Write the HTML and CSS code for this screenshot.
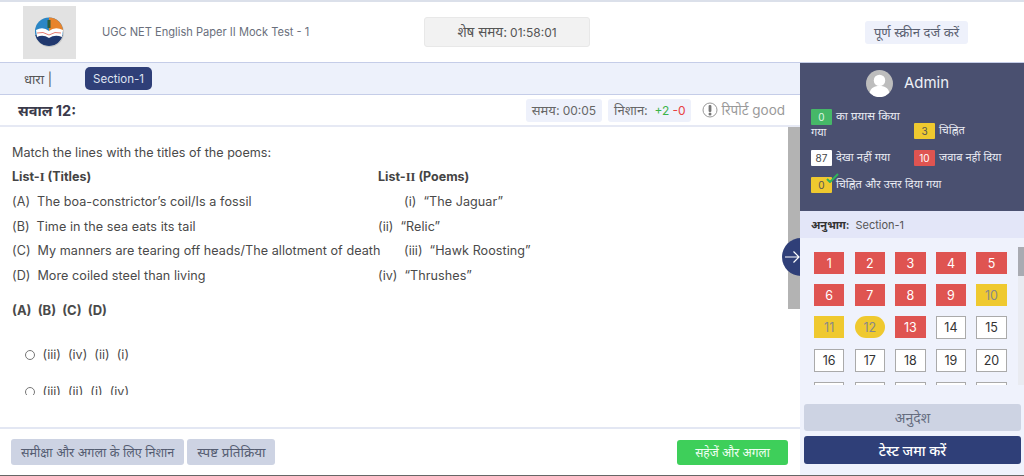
FILE: index.html
```html
<!DOCTYPE html>
<html lang="hi">
<head>
<meta charset="utf-8">
<title>UGC NET English Paper II Mock Test - 1</title>
<link rel="stylesheet" href="styles.css">
</head>
<body>
<div class="page">
  <header class="topbar">
    <svg class="logo" viewBox="0 0 53 53" aria-label="logo">
      <rect width="53" height="53" fill="#e2e2e2"/>
      <circle cx="26.500" cy="26.500" r="14.500" fill="#c6c6c6"/>
      <circle cx="26" cy="25.500" r="14" fill="#2b86c5"/>
      <path d="M26 11.500a14 14 0 0 1 14 14h-14z" fill="#e8842c"/>
      <path d="M12.300 29a14 14 0 0 0 27.400 0z" fill="#21386e"/>
      <path d="M13 24q7-4 13 1q6-5 14-1l-1 7q-7-3-13 1q-6-4-12-1z" fill="#fff"/>
      <path d="M14 27q6-2 12 2q6-4 12-2" fill="none" stroke="#e05a4a" stroke-width=".8"/>
      <rect x="24.500" y="14" width="3" height="8" fill="#2f5d3a"/>
    </svg>
    <div class="test-title">UGC NET English Paper II Mock Test - 1</div>
    <div class="timer">शेष समय: <span class="num">01:58:01</span></div>
    <button class="fullscreen">पूर्ण स्क्रीन दर्ज करें</button>
  </header>
  <div class="workspace">
    <main class="main">
      <div class="section-bar">
        <span class="section-label">धारा |</span>
        <span class="section-pill">Section-1</span>
      </div>
      <div class="question-head">
        <h2 class="question-no">सवाल 12:</h2>
        <div class="question-meta">
          <span class="meta-pill">समय:<span class="num">00:05</span></span>
          <span class="meta-pill">निशान: <span class="num plus">+2</span> <span class="num minus">-0</span></span>
          <span class="report">
            <svg class="report-icon" viewBox="0 0 16 16"><circle cx="8" cy="8" r="7" fill="none" stroke="#999" stroke-width="1"/><rect x="6.600" y="3" width="2.800" height="7" rx="1" fill="#777"/><circle cx="8" cy="12" r="1.500" fill="#777"/></svg>
            रिपोर्ट good
          </span>
        </div>
      </div>
      <div class="question-area">
        <div class="question-scroll">
          <p class="prompt">Match the lines with the titles of the poems:</p>
          <table class="lists">
            <tr><th class="col-a">List-<span class="serif">I</span> (Titles)</th><th>List-<span class="serif">II</span> (Poems)</th></tr>
            <tr><td><span class="tag">(A)</span>The boa-constrictor’s coil/Is a fossil</td><td class="indent"><span class="tag">(i)</span>“The Jaguar”</td></tr>
            <tr><td><span class="tag">(B)</span>Time in the sea eats its tail</td><td><span class="tag">(ii)</span>“Relic”</td></tr>
            <tr><td><span class="tag">(C)</span>My manners are tearing off heads/The allotment of death</td><td class="indent"><span class="tag">(iii)</span>“Hawk Roosting”</td></tr>
            <tr><td><span class="tag">(D)</span>More coiled steel than living</td><td><span class="tag">(iv)</span>“Thrushes”</td></tr>
          </table>
          <p class="answer-key">(A)&nbsp; (B)&nbsp; (C)&nbsp; (D)</p>
          <label class="option"><input type="radio" name="q"> (iii)&nbsp; (iv)&nbsp; (ii)&nbsp; (i)</label>
          <label class="option"><input type="radio" name="q"> (iii)&nbsp; (ii)&nbsp; (i)&nbsp; (iv)</label>
        </div>
        <div class="main-thumb"></div>
      </div>
      <footer class="actions">
        <button class="btn-muted btn-review">समीक्षा और अगला के लिए निशान</button>
        <button class="btn-muted btn-clear">स्पष्ट प्रतिक्रिया</button>
        <button class="btn-save">सहेजें और अगला</button>
      </footer>
    </main>
    <button class="collapse" aria-label="collapse">
      <svg viewBox="0 0 16 16"><path d="M1 8h14M9.500 2.500 15 8l-5.500 5.500" fill="none" stroke="#fff" stroke-width="1.200"/></svg>
    </button>
    <aside class="sidebar">
      <div class="profile">
        <div class="user">
          <svg class="avatar" viewBox="0 0 26 26"><circle cx="13" cy="13" r="13" fill="#bdbdbd"/><circle cx="13" cy="10" r="5.500" fill="#fff"/><path d="M3.500 22c1-5 5-6.500 9.500-6.500s8.500 1.500 9.500 6.500a13 13 0 0 1-19 0z" fill="#fff"/></svg>
          <span class="user-name">Admin</span>
        </div>
        <div class="legend">
          <div class="legend-item"><span class="badge green">0</span><span class="long">का प्रयास किया</span><br>गया</div>
          <div class="legend-item low"><span class="badge yellow">3</span>चिह्नित</div>
          <div class="legend-item"><span class="badge white">87</span>देखा नहीं गया</div>
          <div class="legend-item"><span class="badge red">10</span>जवाब नहीं दिया</div>
          <div class="legend-item wide"><span class="badge yellow checked">0<svg class="tick" viewBox="0 0 13 10"><path d="M1 6l3 3 8-8" fill="none" stroke="#2fb45a" stroke-width="2"/></svg></span>चिह्नित और उत्तर दिया गया</div>
        </div>
      </div>
      <div class="part-head"><b>अनुभाग:</b> Section-1</div>
      <div class="palette-wrap">
        <div class="palette">
          <button class="q red">1</button><button class="q red">2</button><button class="q red">3</button><button class="q red">4</button><button class="q red">5</button>
          <button class="q red">6</button><button class="q red">7</button><button class="q red">8</button><button class="q red">9</button><button class="q yellow">10</button>
          <button class="q yellow">11</button><button class="q yellow current">12</button><button class="q red">13</button><button class="q white">14</button><button class="q white">15</button>
          <button class="q white">16</button><button class="q white">17</button><button class="q white">18</button><button class="q white">19</button><button class="q white">20</button>
          <button class="q white" aria-label="21"></button><button class="q white" aria-label="22"></button><button class="q white" aria-label="23"></button><button class="q white" aria-label="24"></button><button class="q white" aria-label="25"></button>
        </div>
        <div class="palette-track"></div>
      </div>
      <div class="side-actions">
        <button class="btn-instr">अनुदेश</button>
        <button class="btn-submit">टेस्ट जमा करें</button>
      </div>
    </aside>
  </div>
</div>
</body>
</html>
```
FILE: styles.css
```css
* { box-sizing: border-box; }
html, body { margin: 0; height: 100%; overflow: hidden; }
body { font-family: "Inter", "Noto Sans", "Noto Sans Devanagari", sans-serif; color: #444; background: #fff; }
button { font-family: inherit; border: 0; cursor: pointer; }
.page { height: 476px; display: flex; flex-direction: column; border-top: 2px solid #dbe0ea; border-bottom: 1px solid #666; }

.topbar { height: 60px; flex: none; display: flex; align-items: center; padding-left: 23px; }
.logo { width: 53px; height: 53px; flex: none; }
.test-title { width: 322px; margin-left: 26px; font-size: 11.100px; color: #6a6f7c; padding-bottom: 1px; }
.timer { width: 166px; height: 30px; display: flex; align-items: center; justify-content: center; gap: 3px; background: #f2f2f2; border: 1px solid #e8e8e8; border-radius: 3px; font-size: 13.500px; color: #555; }
.timer .num { font-size: 12px; }
.fullscreen { width: 103px; height: 23px; margin-left: 275px; padding: 0; background: #eef1fb; border-radius: 3px; font-size: 13px; color: #5a6070; }

.workspace { flex: 1; display: flex; position: relative; min-height: 0; }
.main { width: 800px; flex: none; display: flex; flex-direction: column; }
.section-bar { height: 33px; flex: none; display: flex; align-items: center; padding-left: 24px; background: #edf1fb; border-top: 1px solid #c5cde8; border-bottom: 1px solid #c5cde8; }
.section-label { width: 61px; font-size: 13px; color: #555; }
.section-pill { width: 67px; height: 23px; display: flex; align-items: center; justify-content: center; background: #2f3f78; border-radius: 5px; color: #dfe4f2; font-size: 11.500px; }

.question-head { height: 32px; flex: none; display: flex; align-items: center; justify-content: space-between; padding: 0 15px 0 18px; border-bottom: 2px solid #e6e9f4; }
.question-no { margin: 0; font-size: 14.500px; font-weight: 700; color: #3a3a4a; }
.question-meta { display: flex; align-items: center; gap: 6px; }
.meta-pill { height: 23px; display: flex; align-items: center; gap: 3px; padding: 0 6px; background: #eef1fb; border-radius: 3px; font-size: 13px; color: #666; white-space: pre; }
.meta-pill .num { font-size: 12px; }
.meta-pill .plus { color: #3cb44a; }
.meta-pill .minus { color: #e8403f; }
.report { display: flex; align-items: center; gap: 3px; margin-left: 5px; font-size: 13.500px; color: #9a9a9a; }
.report-icon { width: 16px; height: 16px; }

.question-area { height: 300px; flex: none; position: relative; }
.question-scroll { height: 268px; overflow: hidden; padding: 16px 0 0 12px; font-size: 12.600px; color: #4a4a4a; }
.main-thumb { position: absolute; right: 0; top: 0; width: 12px; height: 182px; background: #b3b3b3; }
.prompt { margin: 0; line-height: 20px; }
.lists { border-collapse: collapse; table-layout: fixed; width: 700px; margin-top: 1px; }
.lists th { padding: 0; height: 25px; text-align: left; font-size: 12.500px; font-weight: 700; color: #444; }
.lists td { padding: 0; height: 24.700px; white-space: nowrap; letter-spacing: .05px; }
.col-a { width: 366px; }
.serif { font-family: "Liberation Serif", serif; }
.tag { margin-right: 7px; }
.indent { padding-left: 26px !important; }
.answer-key { margin: 12px 0 0; font-size: 13px; font-weight: 700; line-height: 20px; }
.option { display: flex; align-items: center; gap: 4px; margin: 25px 0 0 13px; line-height: 20px; white-space: pre; }
.option input { width: 10px; height: 10px; margin: 0; }
.option + .option { margin-top: 17px; }

.actions { flex: 1; display: flex; align-items: center; gap: 3px; padding: 0 12px 0 11px; border-top: 2px solid #e3e7f3; }
.btn-muted { height: 26px; padding: 0 10px; background: #cdd3e3; border-radius: 3px; color: #555d72; }
.btn-review { font-size: 12.600px; }
.btn-clear { font-size: 13.400px; }
.btn-save { width: 111px; height: 25px; margin-left: auto; background: #3ecf5a; border-radius: 3px; font-size: 12px; color: #f2fff4; }

.collapse { position: absolute; left: 782px; top: 176px; width: 38px; height: 38px; padding: 0 0 0 2px; border-radius: 50%; background: #2f3f78; z-index: 1; display: flex; align-items: center; }
.collapse svg { width: 16px; height: 16px; }

.sidebar { width: 224px; flex: none; display: flex; flex-direction: column; background: #eff2fc; position: relative; z-index: 2; }
.profile { height: 149px; flex: none; padding: 7px 0 0 11px; background: #4a5070; color: #eef0f6; border-top: 1px solid #c5cde8; }
.user { display: flex; align-items: center; justify-content: center; gap: 11px; padding-right: 20px; }
.avatar { width: 27px; height: 27px; }
.user-name { font-size: 15px; padding-bottom: 3px; }
.legend { display: grid; grid-template-columns: 103px 103px; margin-top: 12px; font-size: 11px; line-height: 14px; row-gap: 11px; }
.legend-item { color: #e8eaf2; }
.legend-item .long { font-size: 11.500px; }
.legend-item.low { align-self: end; }
.legend-item.wide { grid-column: 1 / 3; }
.badge { display: inline-block; width: 21px; height: 16px; margin-right: 4px; text-align: center; border-radius: 1px; font-size: 10px; line-height: 16px; vertical-align: top; }
.badge.green { background: #46b868; color: #dff5e5; }
.badge.yellow { background: #efc92f; color: #555; }
.badge.white { background: #fff; color: #444; }
.badge.red { background: #df5451; color: #fff; }
.checked { position: relative; }
.tick { position: absolute; left: 15px; top: -4px; width: 13px; height: 10px; }
.part-head { height: 27px; flex: none; display: flex; align-items: center; gap: 6px; padding-left: 11px; background: #e3e6f8; font-size: 11px; color: #555; }
.part-head b { color: #333; }
.palette-wrap { margin-top: 9px; height: 138px; flex: none; overflow: hidden; position: relative; }
.palette-track { position: absolute; right: 0; top: 0; bottom: 0; width: 6px; background: #e9ebf1; }
.palette-track::before { content: ""; display: block; height: 29px; background: #a9abb2; }
.palette { display: grid; grid-template-columns: repeat(5, 30.400px); column-gap: 10.200px; row-gap: 10px; padding: 5px 0 0 14px; }
.q { height: 22px; padding: 0; font-size: 12.500px; font-family: inherit; }
.q.red { background: #df5451; color: #fff; }
.q.yellow { background: #efc92f; color: #888; }
.q.white { background: #fff; border: 1px solid #aaa; color: #333; height: 23px; }
.q.current { border-radius: 11px; }
.side-actions { display: flex; flex-direction: column; gap: 5px; padding: 19px 3px 0 4px; }
.btn-instr { height: 27px; background: #cdd3e3; border-radius: 3px; font-size: 14px; color: #666d80; }
.btn-submit { height: 28px; background: #2f3f78; border-radius: 3px; font-size: 14px; color: #fff; font-weight: 500; }
```
